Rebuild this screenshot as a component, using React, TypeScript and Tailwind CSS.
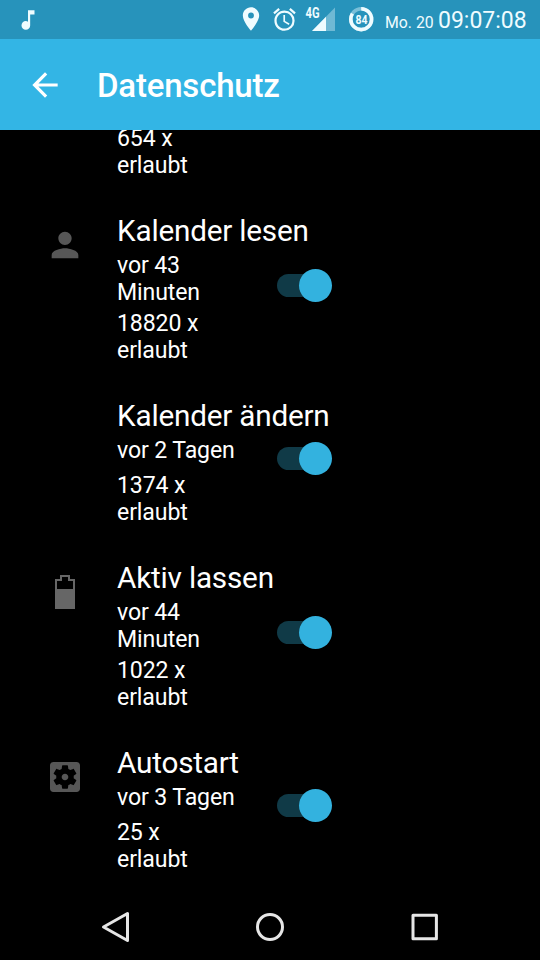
import React from "react";
import { MdAlarm, MdArrowBack, MdLocationOn, MdMusicNote, MdPerson } from "react-icons/md";

type Permission = {
  title: string;
  ago: string[];
  count: string;
  icon?: React.ReactNode;
};

function BatteryIcon() {
  return (
    <svg width="40" height="40" viewBox="0 0 40 40" fill="none">
      <path d="M11 36V8H16V4H24V8H29V36Z" stroke="#666" strokeWidth="2" />
      <path d="M10 17H30V37H10Z" fill="#666" />
    </svg>
  );
}

function GearIcon() {
  return (
    <svg width="40" height="40" viewBox="0 0 24 24" fill="currentColor">
      <path d="M12 10c-1.1 0-2 .9-2 2s.9 2 2 2 2-.9 2-2-.9-2-2-2zm7-7H5c-1.11 0-2 .9-2 2v14c0 1.1.89 2 2 2h14c1.11 0 2-.9 2-2V5c0-1.1-.89-2-2-2zm-1.75 9c0 .23-.02.46-.05.68l1.48 1.16c.13.11.17.3.08.45l-1.4 2.42c-.09.15-.27.21-.43.15l-1.74-.7c-.36.28-.76.51-1.18.69l-.26 1.85c-.03.17-.18.3-.35.3h-2.8c-.17 0-.32-.13-.35-.29l-.26-1.85c-.43-.18-.82-.41-1.18-.69l-1.74.7c-.16.06-.34 0-.43-.15l-1.4-2.42c-.09-.15-.05-.34.08-.45l1.48-1.16c-.03-.23-.05-.46-.05-.69 0-.23.02-.46.05-.68l-1.48-1.16c-.13-.11-.17-.3-.08-.45l1.4-2.42c.09-.15.27-.21.43-.15l1.74.7c.36-.28.76-.51 1.18-.69l.26-1.85c.03-.17.18-.3.35-.3h2.8c.17 0 .32.13.35.29l.26 1.85c.43.18.82.41 1.18.69l1.74-.7c.16-.06.34 0 .43.15l1.4 2.42c.09.15.05.34-.08.45l-1.48 1.16c.03.23.05.46.05.69z" />
    </svg>
  );
}

const permissions: Permission[] = [
  { title: "Kalender lesen", ago: ["vor 43", "Minuten"], count: "18820 x", icon: <MdPerson size={40} /> },
  { title: "Kalender ändern", ago: ["vor 2 Tagen"], count: "1374 x" },
  { title: "Aktiv lassen", ago: ["vor 44", "Minuten"], count: "1022 x", icon: <BatteryIcon /> },
  { title: "Autostart", ago: ["vor 3 Tagen"], count: "25 x", icon: <GearIcon /> },
];

function Toggle() {
  return (
    <div className="flex h-[33px] w-[55px] items-center">
      <div className="h-[23px] w-[38px] shrink-0 rounded-l-full bg-[#103a47]" />
      <div className="-ml-4 size-[33px] shrink-0 rounded-full bg-[#33b2df]" />
    </div>
  );
}

function PermissionRow({ title, ago, count, icon }: Permission) {
  return (
    <div className="flex pb-[34px]">
      <div className="mt-3 ml-[45px] h-10 w-[72px] shrink-0 text-[#575757]">{icon}</div>
      <div className="w-[160px] shrink-0">
        <div className="h-[35px] text-[29.7px] leading-[35px] tracking-[-0.2px] whitespace-nowrap">{title}</div>
        <div className="mt-1 text-[23.1px] leading-[27px] tracking-[-0.12px]">
          {ago.map((line) => (
            <div key={line}>{line}</div>
          ))}
        </div>
        <div className={ago.length > 1 ? "mt-1 text-[23.1px] leading-[27px] tracking-[-0.12px]" : "mt-2 text-[23.1px] leading-[27px] tracking-[-0.12px]"}>
          <div>{count}</div>
          <div>erlaubt</div>
        </div>
      </div>
      <div className="flex items-center pb-[7px]">
        <Toggle />
      </div>
    </div>
  );
}

function StatusBar() {
  return (
    <div className="flex h-[39px] shrink-0 items-start bg-[#2793bb] text-[#effcff]">
      <MdMusicNote size={26} className="mt-[7px] ml-[15px]" />
      <MdLocationOn size={28} className="mt-[5px] ml-[196px]" />
      <MdAlarm size={27} className="mt-[6px] ml-[6px]" />
      <svg width="32" height="32" viewBox="0 0 32 32" className="mt-1 ml-[6px]">
        <path d="M31 3.5V27H8Z" fill="#6fb9d4" />
        <path d="M22 12.7V27H8Z" fill="currentColor" />
        <path d="M1 2H17V13L15 15H1Z" fill="#2793bb" />
        <text x="1.5" y="14" fontSize="14" fontWeight="700" fill="currentColor" textLength="14" lengthAdjust="spacingAndGlyphs">
          4G
        </text>
      </svg>
      <svg width="26" height="26" viewBox="0 0 26 26" className="mt-[6px] ml-3">
        <circle cx="13.2" cy="13.2" r="10.4" stroke="#79bfd8" strokeWidth="3.6" fill="none" />
        <circle cx="13.2" cy="13.2" r="10.4" stroke="currentColor" strokeWidth="3.6" fill="none" pathLength="100" strokeDasharray="84 16" transform="rotate(-90 13.2 13.2)" />
        <text x="7.4" y="17.8" fontSize="13" fontWeight="700" fill="currentColor" textLength="12" lengthAdjust="spacingAndGlyphs">
          84
        </text>
      </svg>
      <div className="mt-[7px] ml-[11px] flex items-baseline whitespace-nowrap">
        <span className="w-[53px] text-[15.8px] leading-[28px]">Mo. 20</span>
        <span className="text-[23px] leading-[28px]">09:07:08</span>
      </div>
    </div>
  );
}

export default function App() {
  return (
    <div className="flex h-[960px] w-[540px] flex-col overflow-hidden bg-black font-['Roboto',sans-serif] text-white">
      <StatusBar />
      <header className="flex h-[91px] shrink-0 items-center bg-[#33b5e5]">
        <MdArrowBack size={38} className="ml-[26px]" />
        <h1 className="mt-0.5 ml-[33px] text-[33px] leading-[40px] font-medium tracking-[-0.2px]">Datenschutz</h1>
      </header>
      <main className="h-[765px] shrink-0 overflow-hidden">
        <div className="-mt-[5px] mb-[34px] ml-[117px] text-[23.1px] leading-[27px] tracking-[-0.12px]">
          <div>654 x</div>
          <div>erlaubt</div>
        </div>
        {permissions.map((permission) => (
          <PermissionRow key={permission.title} {...permission} />
        ))}
      </main>
      <nav className="flex h-16 shrink-0 items-center pl-[100px] text-[#e6e6e6]">
        <svg width="32" height="34" viewBox="0 0 32 34" fill="none" stroke="currentColor" strokeWidth="3" strokeLinejoin="round">
          <path d="M27.5 3.5V30.5L3.5 17Z" />
        </svg>
        <svg width="30" height="30" viewBox="0 0 30 30" fill="none" stroke="currentColor" strokeWidth="3" className="ml-[123px]">
          <circle cx="15" cy="15" r="12.5" />
        </svg>
        <svg width="28" height="28" viewBox="0 0 28 28" fill="none" stroke="currentColor" strokeWidth="3" strokeLinejoin="round" className="ml-[126px]">
          <rect x="2" y="2.3" width="23.4" height="23.4" />
        </svg>
      </nav>
    </div>
  );
}
